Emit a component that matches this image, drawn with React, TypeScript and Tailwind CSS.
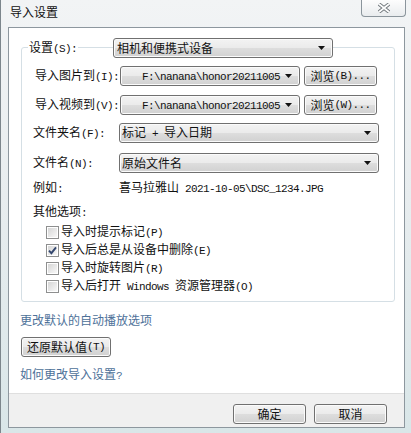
import type { ReactNode } from 'react'

const btnBg =
  'border border-[#707070] rounded-[3px] bg-[linear-gradient(#f3f3f3,#ebebeb_48%,#dddddd_52%,#d1d1d1)] shadow-[inset_0_0_0_1px_#fbfbfb]'

function L({ children }: { children: ReactNode }) {
  return (
    <span className="font-['Liberation_Mono','Noto_Sans_CJK_SC',monospace] text-[11px] tracking-[-0.6px]">
      {children}
    </span>
  )
}

function Arrow() {
  return (
    <svg width="7" height="4" viewBox="0 0 7 4" className="shrink-0">
      <polygon points="0,0 7,0 3.5,4" fill="#111" />
    </svg>
  )
}

function Combo({ width, pad, children }: { width: string; pad: string; children: ReactNode }) {
  return (
    <div className={`${width} ${btnBg} flex h-[20px] items-center justify-between pr-[7px]`}>
      <span className={`${pad} whitespace-nowrap leading-[16px]`}>{children}</span>
      <Arrow />
    </div>
  )
}

function Button({ width, children }: { width: string; children: ReactNode }) {
  return (
    <button
      type="button"
      className={`${width} ${btnBg} flex h-[20px] items-center justify-center whitespace-nowrap leading-[16px] text-[#111]`}
    >
      {children}
    </button>
  )
}

function Check({ checked, children }: { checked?: boolean; children: ReactNode }) {
  return (
    <div className="flex h-[18px] items-center gap-[2px] pl-[24px]">
      <span className="h-[13px] w-[13px] shrink-0 border border-[#8e8f8f] bg-white p-[1px]">
        <span className="flex h-full w-full items-center justify-center bg-[linear-gradient(135deg,#d6d6d6,#f8f8f8)]">
          {checked && (
            <svg width="9" height="9" viewBox="0 0 9 9">
              <path d="M1 4.6 L3.4 7.2 L8 1.4" fill="none" stroke="#33466e" strokeWidth="1.9" />
            </svg>
          )}
        </span>
      </span>
      <span className="leading-[16px]">{children}</span>
    </div>
  )
}

export default function App() {
  return (
    <div className="flex h-[433px] w-[411px] flex-col border-l border-[#7c868c] bg-[linear-gradient(180deg,#f2f4f5,#e8edef_45%,#d9e6e8)] font-['Noto_Sans_CJK_SC',sans-serif] text-[12px] text-[#111]">
      {/* title bar */}
      <div className="flex h-[27px] shrink-0 items-start justify-between pl-[9px] pr-[5px]">
        <span className="pt-[4px] leading-[16px]">导入设置</span>
        <div className="flex h-[17px] w-[45px] items-center justify-center rounded-b-[4px] border border-t-0 border-[#8b959c] bg-[linear-gradient(#fdfdfd,#e9ecee)]">
          <svg width="14" height="10" viewBox="0 0 14 10">
            <path d="M2 1 L12 9 M12 1 L2 9" stroke="#6c7378" strokeWidth="3.6" />
            <path d="M2 1 L12 9 M12 1 L2 9" stroke="#fdfdfd" strokeWidth="1.8" />
          </svg>
        </div>
      </div>

      {/* client area */}
      <div className="mb-[5px] ml-[7px] mr-[6px] flex flex-1 flex-col border border-[#8d979e] bg-white">
        <div className="ml-[12px] mr-[9px] mt-[19px] rounded-[3px] border border-[#d5dfe5] pb-[6px]">
          <div className="-mt-[10px] flex h-[20px] items-center">
            <span className="ml-[6px] bg-white px-[1px] leading-[16px]">
              设置<L>(S):</L>
            </span>
            <div className="ml-[35px] bg-white">
              <Combo width="w-[220px]" pad="pl-[3px]">相机和便携式设备</Combo>
            </div>
          </div>

          <div className="mt-[8px] flex items-center pl-[13px]">
            <span className="w-[85px] leading-[16px]">
              导入图片到<L>(I):</L>
            </span>
            <Combo width="w-[180px]" pad="pl-[21px]">
              <L>F:\nanana\honor20211005</L>
            </Combo>
            <div className="ml-[4px]">
              <Button width="w-[73px]">
                浏览<L>(B)...</L>
              </Button>
            </div>
          </div>

          <div className="mt-[9px] flex items-center pl-[13px]">
            <span className="w-[85px] leading-[16px]">
              导入视频到<L>(V):</L>
            </span>
            <Combo width="w-[180px]" pad="pl-[21px]">
              <L>F:\nanana\honor20211005</L>
            </Combo>
            <div className="ml-[4px]">
              <Button width="w-[73px]">
                浏览<L>(W)...</L>
              </Button>
            </div>
          </div>

          <div className="mt-[8px] flex items-center pl-[11px]">
            <span className="w-[86px] leading-[16px]">
              文件夹名<L>(F):</L>
            </span>
            <Combo width="w-[260px]" pad="pl-[2px]">
              标记<L> + </L>导入日期
            </Combo>
          </div>

          <div className="mt-[10px] flex items-center pl-[11px]">
            <span className="w-[86px] leading-[16px]">
              文件名<L>(N):</L>
            </span>
            <Combo width="w-[260px]" pad="pl-[2px]">
              原始文件名
            </Combo>
          </div>

          <div className="mt-[6px] flex items-center pl-[11px] leading-[16px]">
            <span className="w-[86px]">
              例如<L>:</L>
            </span>
            <span>
              喜马拉雅山<L> 2021-10-05\DSC_1234.JPG</L>
            </span>
          </div>

          <div className="mt-[6px] pl-[11px] leading-[16px]">
            其他选项<L>:</L>
          </div>

          <div className="mt-[2px] flex flex-col">
            <Check>
              导入时提示标记<L>(P)</L>
            </Check>
            <Check checked>
              导入后总是从设备中删除<L>(E)</L>
            </Check>
            <Check>
              导入时旋转图片<L>(R)</L>
            </Check>
            <Check>
              导入后打开<L> Windows </L>资源管理器<L>(O)</L>
            </Check>
          </div>
        </div>

        <a className="ml-[11px] mt-[10px] self-start leading-[16px] text-[#4d7199]">更改默认的自动播放选项</a>

        <div className="ml-[12px] mt-[9px]">
          <Button width="w-[90px]">
            还原默认值<L>(T)</L>
          </Button>
        </div>

        <a className="ml-[11px] mt-[9px] self-start leading-[16px] text-[#4d7199]">
          如何更改导入设置<L>?</L>
        </a>

        <div className="mt-[9px] flex flex-1 justify-end gap-[8px] border-t border-[#dfdfdf] bg-[#f0f0f0] pr-[17px] pt-[10px]">
          <Button width="w-[73px]">确定</Button>
          <Button width="w-[73px]">取消</Button>
        </div>
      </div>
    </div>
  )
}
